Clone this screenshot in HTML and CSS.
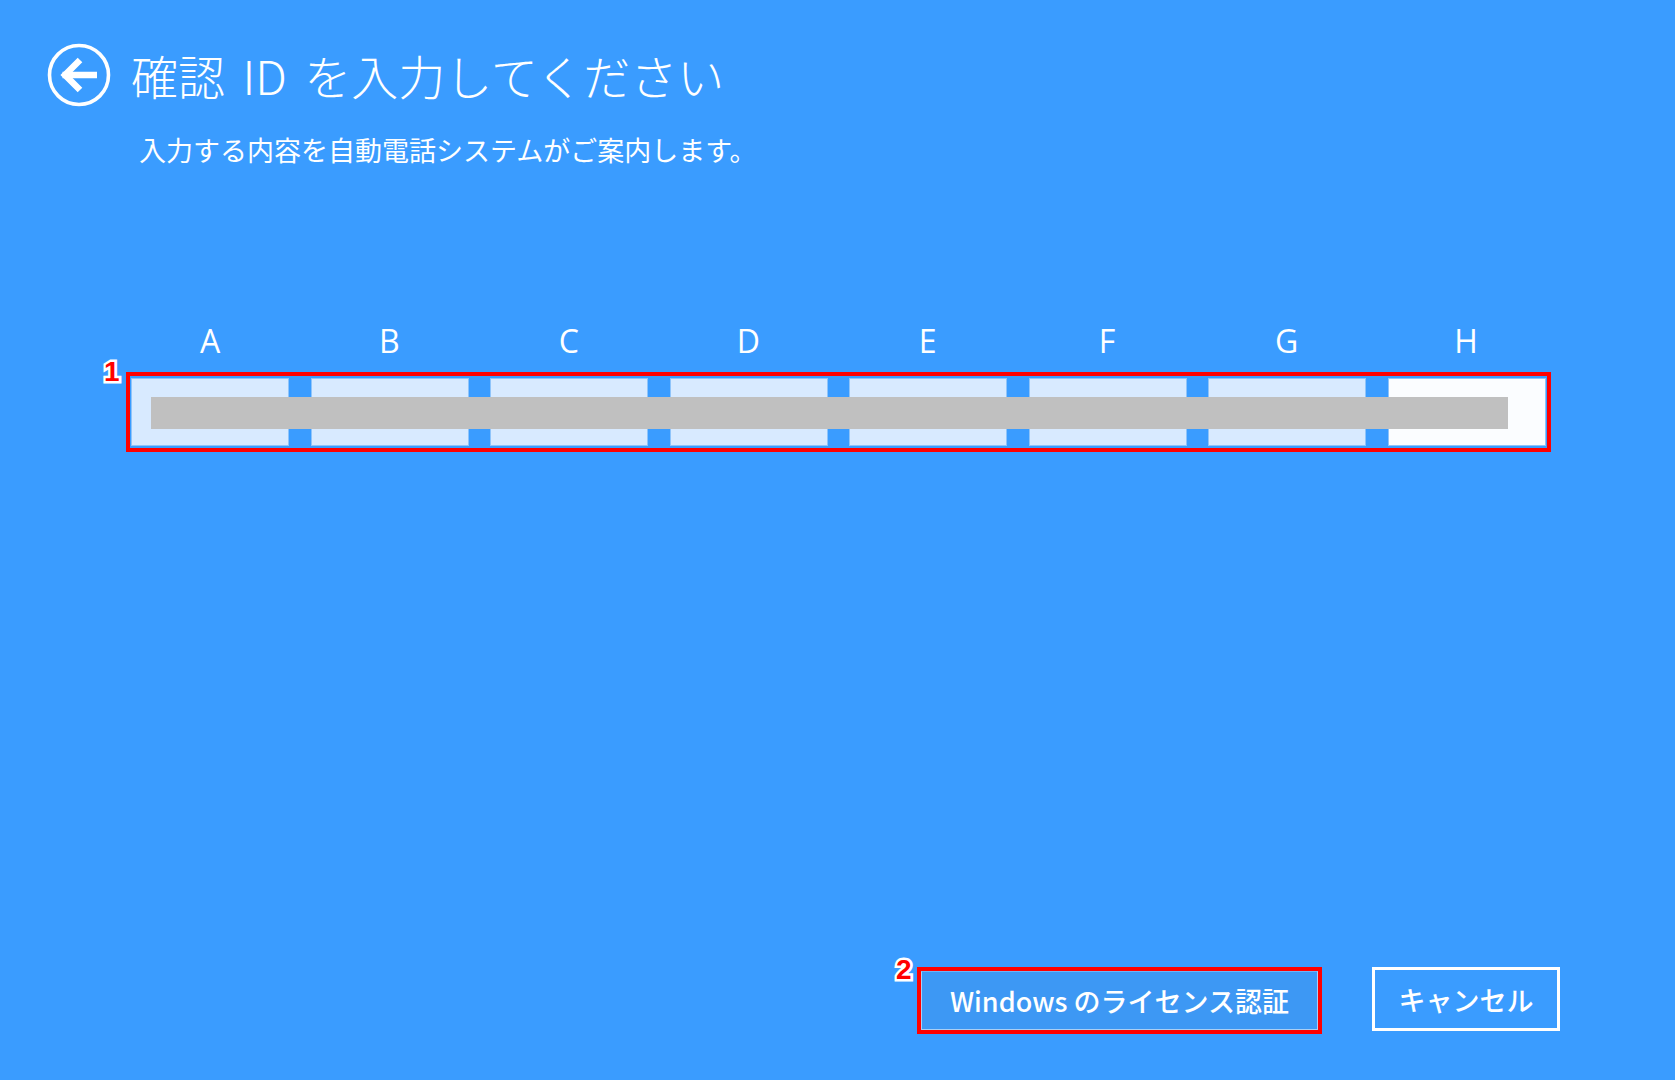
FILE: index.html
```html
<!DOCTYPE html>
<html lang="ja">
<head>
<meta charset="utf-8">
<title>確認 ID を入力してください</title>
<link rel="stylesheet" href="styles.css">
</head>
<body>
<div class="page">
  <header class="header">
    <svg class="back" viewBox="0 0 64 64" width="64" height="64" aria-hidden="true">
      <circle cx="32" cy="32" r="29.5" fill="none" stroke="#fff" stroke-width="3.6"/>
      <path d="M15.5 32 H50" fill="none" stroke="#fff" stroke-width="6.5"/>
      <path d="M33 17 L18 32 L33 47" fill="none" stroke="#fff" stroke-width="6.5" stroke-linejoin="miter" stroke-miterlimit="10"/>
    </svg>
    <h1 class="title">確認 ID を入力してください</h1>
  </header>
  <p class="subtitle">入力する内容を自動電話システムがご案内します。</p>

  <div class="labels">
    <span>A</span><span>B</span><span>C</span><span>D</span><span>E</span><span>F</span><span>G</span><span>H</span>
  </div>
  <div class="input-wrap">
    <span class="num num-1">1</span>
    <div class="input-box">
      <div class="cells">
        <div class="cell"></div><div class="cell"></div><div class="cell"></div><div class="cell"></div>
        <div class="cell"></div><div class="cell"></div><div class="cell"></div><div class="cell cell-active"></div>
      </div>
      <div class="redact"></div>
    </div>
  </div>

  <div class="actions">
    <div class="btn-wrap">
      <span class="num num-2">2</span>
      <div class="mark">
        <button class="btn btn-primary">Windows のライセンス認証</button>
      </div>
    </div>
    <button class="btn btn-cancel">キャンセル</button>
  </div>
</div>
</body>
</html>
```
FILE: styles.css
```css
html, body {
  margin: 0;
  padding: 0;
}
body {
  background: #3a9cff;
  color: #fff;
  font-family: "Noto Sans CJK JP", "Noto Sans", sans-serif;
}
.page {
  height: 1080px;
  box-sizing: border-box;
  display: flex;
  flex-direction: column;
  padding: 43px 115px 46px 0;
}
.header {
  display: flex;
  align-items: center;
  padding-left: 47px;
  height: 64px;
}
.back {
  display: block;
  flex: none;
}
.title {
  margin: 0 0 0 20px;
  font-size: 47px;
  font-weight: 300;
  line-height: 64px;
  word-spacing: 7px;
}
.subtitle {
  margin: 23px 0 0 139px;
  font-size: 27px;
  line-height: 40px;
  font-weight: 400;
}
.labels {
  margin: 151px 0 0 131px;
  width: 1414px;
  display: grid;
  grid-template-columns: repeat(8, 1fr);
  column-gap: 21.4px;
  font-family: "Open Sans", "Noto Sans", sans-serif;
  font-size: 32px;
  line-height: 40px;
  text-align: center;
}
.input-wrap {
  position: relative;
  margin: 11px 0 0 126px;
  width: 1425px;
}
.input-box {
  position: relative;
  border: 4px solid #ff0000;
  padding: 2px 1px 2px 1px;
}
.cells {
  display: grid;
  grid-template-columns: repeat(8, 1fr);
  column-gap: 21.4px;
  height: 68px;
}
.cell {
  background: #d8eaff;
  border: 1px solid #8fc4fa;
}
.cell-active {
  background: #fbfdff;
}
.redact {
  position: absolute;
  left: 21px;
  top: 21px;
  width: 1357px;
  height: 32px;
  background: #c0c0c0;
}
.num {
  position: absolute;
  font-family: "Liberation Sans", Arial, sans-serif;
  font-weight: 700;
  font-size: 28px;
  line-height: 1;
  color: #ff0000;
  -webkit-text-stroke: 5px #fff;
  paint-order: stroke fill;
}
.num-1 {
  left: -22px;
  top: -14px;
}
.actions {
  margin-top: auto;
  display: flex;
  justify-content: flex-end;
  align-items: flex-start;
  gap: 50px;
}
.btn-wrap {
  position: relative;
}
.num-2 {
  left: -21px;
  top: -11px;
}
.mark {
  border: 4px solid #ff0000;
  width: 397px;
  height: 59px;
  box-sizing: content-box;
}
.btn {
  font-family: "Noto Sans CJK JP", "Noto Sans", sans-serif;
  font-size: 27px;
  font-weight: 500;
  color: #fff;
  margin: 0;
  cursor: pointer;
}
.btn-primary {
  display: block;
  width: 100%;
  height: 100%;
  background: #3d98f4;
  border: 1px solid #a9cff5;
  border-top-color: #6fb3f7;
  padding: 0;
}
.btn-cancel {
  width: 188px;
  height: 64px;
  box-sizing: border-box;
  background: transparent;
  border: 3px solid #fff;
  padding: 0;
}
```
